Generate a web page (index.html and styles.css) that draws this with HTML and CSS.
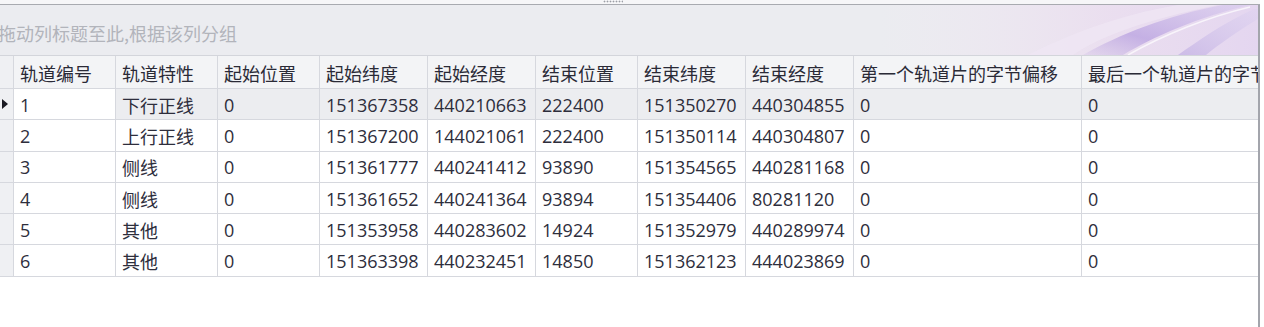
FILE: index.html
```html
<!DOCTYPE html>
<html lang="zh-CN">
<head>
<meta charset="utf-8">
<title>轨道数据</title>
<link rel="stylesheet" href="styles.css">
</head>
<body>
<div class="window">
  <div class="top-strip"><span class="grip"></span></div>
  <div class="grid">
    <div class="group-panel">
      <span class="group-hint">拖动列标题至此,根据该列分组</span>
      <svg class="swoosh" width="380" height="50" viewBox="0 0 380 50" aria-hidden="true">
        <defs>
          <linearGradient id="glow" x1="0" y1="0" x2="1" y2="0">
            <stop offset="0" stop-color="#f1e6f2" stop-opacity="0"/>
            <stop offset="0.6" stop-color="#ead9ef" stop-opacity="0.7"/>
            <stop offset="1" stop-color="#e4d6f0" stop-opacity="1"/>
          </linearGradient>
          <linearGradient id="band" x1="0" y1="1" x2="1" y2="0">
            <stop offset="0" stop-color="#c4b0e2" stop-opacity="0.2"/>
            <stop offset="0.35" stop-color="#bea8e2" stop-opacity="0.85"/>
            <stop offset="1" stop-color="#d8cbee" stop-opacity="0.6"/>
          </linearGradient>
          <linearGradient id="band2" x1="0" y1="1" x2="1" y2="0">
            <stop offset="0" stop-color="#c9b8e6" stop-opacity="0.9"/>
            <stop offset="1" stop-color="#ddd2f0" stop-opacity="0.5"/>
          </linearGradient>
        </defs>
        <rect x="0" y="0" width="380" height="50" fill="url(#glow)"/>
        <path d="M150 50 C 190 30, 240 10, 300 0 L 340 0 C 270 14, 220 32, 195 50 Z" fill="#efe6f4" opacity="0.8"/>
        <path d="M205 50 C 240 30, 290 10, 345 0 L 372 0 C 320 12, 275 32, 245 50 Z" fill="url(#band)"/>
        <path d="M300 50 C 320 36, 345 18, 376 4 L 380 4 L 380 14 C 360 26, 340 40, 328 50 Z" fill="url(#band2)"/>
        <path d="M250 50 C 285 30, 330 12, 372 2" stroke="#ffffff" stroke-opacity="0.7" stroke-width="1.5" fill="none"/>
      </svg>
    </div>
    <div class="row header">
      <div class="cell ind"></div>
      <div class="cell">轨道编号</div>
      <div class="cell">轨道特性</div>
      <div class="cell">起始位置</div>
      <div class="cell">起始纬度</div>
      <div class="cell">起始经度</div>
      <div class="cell">结束位置</div>
      <div class="cell">结束纬度</div>
      <div class="cell">结束经度</div>
      <div class="cell">第一个轨道片的字节偏移</div>
      <div class="cell last">最后一个轨道片的字节偏移</div>
    </div>
    <div class="row data focused">
      <div class="cell ind"><span class="arrow"></span></div>
      <div class="cell focus">1</div>
      <div class="cell">下行正线</div>
      <div class="cell">0</div>
      <div class="cell">151367358</div>
      <div class="cell">440210663</div>
      <div class="cell">222400</div>
      <div class="cell">151350270</div>
      <div class="cell">440304855</div>
      <div class="cell">0</div>
      <div class="cell last">0</div>
    </div>
    <div class="row data">
      <div class="cell ind"></div>
      <div class="cell">2</div>
      <div class="cell">上行正线</div>
      <div class="cell">0</div>
      <div class="cell">151367200</div>
      <div class="cell">144021061</div>
      <div class="cell">222400</div>
      <div class="cell">151350114</div>
      <div class="cell">440304807</div>
      <div class="cell">0</div>
      <div class="cell last">0</div>
    </div>
    <div class="row data">
      <div class="cell ind"></div>
      <div class="cell">3</div>
      <div class="cell">侧线</div>
      <div class="cell">0</div>
      <div class="cell">151361777</div>
      <div class="cell">440241412</div>
      <div class="cell">93890</div>
      <div class="cell">151354565</div>
      <div class="cell">440281168</div>
      <div class="cell">0</div>
      <div class="cell last">0</div>
    </div>
    <div class="row data">
      <div class="cell ind"></div>
      <div class="cell">4</div>
      <div class="cell">侧线</div>
      <div class="cell">0</div>
      <div class="cell">151361652</div>
      <div class="cell">440241364</div>
      <div class="cell">93894</div>
      <div class="cell">151354406</div>
      <div class="cell">80281120</div>
      <div class="cell">0</div>
      <div class="cell last">0</div>
    </div>
    <div class="row data">
      <div class="cell ind"></div>
      <div class="cell">5</div>
      <div class="cell">其他</div>
      <div class="cell">0</div>
      <div class="cell">151353958</div>
      <div class="cell">440283602</div>
      <div class="cell">14924</div>
      <div class="cell">151352979</div>
      <div class="cell">440289974</div>
      <div class="cell">0</div>
      <div class="cell last">0</div>
    </div>
    <div class="row data">
      <div class="cell ind"></div>
      <div class="cell">6</div>
      <div class="cell">其他</div>
      <div class="cell">0</div>
      <div class="cell">151363398</div>
      <div class="cell">440232451</div>
      <div class="cell">14850</div>
      <div class="cell">151362123</div>
      <div class="cell">444023869</div>
      <div class="cell">0</div>
      <div class="cell last">0</div>
    </div>
    <div class="empty"></div>
  </div>
</div>
</body>
</html>
```

FILE: styles.css
```css
* { box-sizing: border-box; }
html, body {
  margin: 0;
  padding: 0;
  background: #ffffff;
}
body {
  width: 1264px;
  height: 327px;
  overflow: hidden;
  font-family: "Open Sans", "Noto Sans CJK SC", sans-serif;
  font-size: 18px;
  color: #2e2e3c;
}
.window {
  width: 1264px;
  height: 327px;
  display: flex;
  flex-direction: column;
}
.top-strip {
  height: 5px;
  width: 1260px;
  background: #f6f6f8;
  border-bottom: 1px solid #a8aab0;
  display: flex;
  justify-content: center;
  flex: none;
}
.grip {
  width: 20px;
  height: 3px;
  margin-left: -34px;
  background-image: radial-gradient(circle, #9c9ea6 0.8px, transparent 1.1px);
  background-size: 3px 3px;
}
.grid {
  width: 1260px;
  flex: 1;
  border-right: 2px solid #a3a5ac;
  overflow: hidden;
  display: flex;
  flex-direction: column;
}
.group-panel {
  position: relative;
  height: 51px;
  flex: none;
  background: #ebecf0;
  border-bottom: 1px solid #d3d5db;
  display: flex;
  align-items: center;
  padding-top: 6px;
  overflow: hidden;
}
.group-hint {
  margin-left: -2px;
  color: #b2b4bb;
  font-family: "Noto Sans CJK SC", sans-serif;
  font-size: 18px;
  white-space: nowrap;
}
.swoosh {
  position: absolute;
  right: 0;
  top: 0;
}
.row {
  display: grid;
  grid-template-columns: 14px 102px 102px 102px 108px 108px 102px 108px 108px 228px 1fr;
  flex: none;
}
.cell {
  border-right: 1px solid #d6d8de;
  border-bottom: 1px solid #d6d8de;
  padding-left: 6px;
  display: flex;
  align-items: center;
  white-space: nowrap;
  overflow: hidden;
}
.cell.last { border-right: none; }
.header {
  height: 33px;
  background: #f3f4f6;
}
.header .cell {
  font-family: "Noto Sans CJK SC", sans-serif;
  color: #2a2a36;
  padding-top: 1px;
}
.data { height: 31.3px; }
.data .cell { padding-top: 1px; }
.cell.ind {
  background: #eff0f3;
  padding: 0;
  justify-content: flex-start;
}
.focused .cell { background: #ecedf0; }
.focused .cell.focus { background: #ffffff; }
.focused .cell.ind { background: #eff0f3; }
.arrow {
  width: 0;
  height: 0;
  margin-left: 2px;
  border-top: 5px solid transparent;
  border-bottom: 5px solid transparent;
  border-left: 6px solid #1a1a22;
}
.empty {
  flex: 1;
  background: #ffffff;
}
```
